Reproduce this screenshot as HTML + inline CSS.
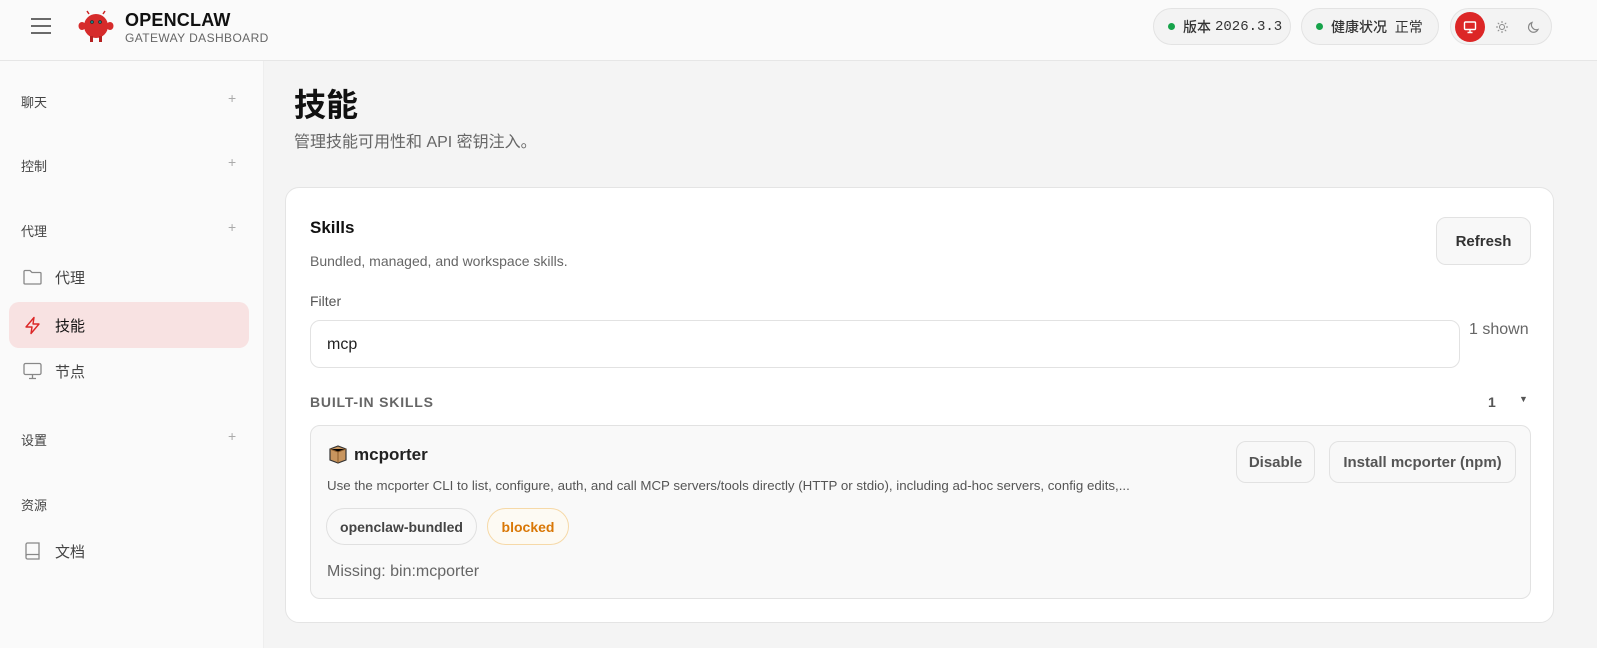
<!DOCTYPE html>
<html><head><meta charset="utf-8">
<style>
*{box-sizing:border-box;margin:0;padding:0}
body{width:1597px;height:648px;overflow:hidden;background:#f4f4f4;font-family:"Liberation Sans","Noto Sans CJK SC",sans-serif;color:#1f1f1f;position:relative}
.top{position:absolute;left:0;top:0;width:1597px;height:61px;background:#fafafa;border-bottom:1px solid #e6e6e6}
.side{position:absolute;left:0;top:61px;width:264px;height:587px;background:#fafafa;border-right:1px solid #eee}
.abs{position:absolute}
.pill{position:absolute;top:8px;height:37px;border:1px solid #e3e3e3;border-radius:19px;background:#f3f3f3;font-size:14px;display:flex;align-items:center;padding-left:14px;color:#333}
.dot{width:7px;height:7px;border-radius:50%;background:#16a34a;margin-right:8px}
.sec{position:absolute;left:21px;font-size:13px;color:#444}
.plus{position:absolute;left:228px;font-size:14px;color:#aaa}
.item{position:absolute;left:9px;width:240px;height:46px;border-radius:10px;display:flex;align-items:center;padding-left:14px;font-size:15px;color:#444}
.item svg{margin-right:13px}
.card{position:absolute;left:285px;top:187px;width:1269px;height:436px;background:#fff;border:1px solid #e4e4e4;border-radius:14px}
.btn{position:absolute;border:1px solid #e2e2e2;border-radius:10px;background:#f8f8f8;font-size:15px;display:flex;align-items:center;justify-content:center;color:#333}
.chip{position:absolute;height:37px;border-radius:19px;font-size:14px;display:flex;align-items:center;justify-content:center;font-weight:600}
</style></head><body>
<div class="top">
  <svg class="abs" style="left:30px;top:17px" width="22" height="18" viewBox="0 0 22 18"><path d="M1 2h20M1 9h20M1 16h20" stroke="#555" stroke-width="1.8"/></svg>
  <svg class="abs" style="left:78px;top:9px" width="36" height="34" viewBox="0 0 36 34"><path d="M11 5l-2-3M25 5l2-3" stroke="#c22" stroke-width="1.5"/><ellipse cx="18" cy="17" rx="12" ry="12" fill="#d62b2b"/><ellipse cx="4" cy="17" rx="3.5" ry="4" fill="#d62b2b"/><ellipse cx="32" cy="17" rx="3.5" ry="4" fill="#d62b2b"/><rect x="12" y="27" width="3" height="6" fill="#b52020"/><rect x="21" y="27" width="3" height="6" fill="#b52020"/><circle cx="14" cy="13" r="1.8" fill="#133"/><circle cx="22" cy="13" r="1.8" fill="#133"/><circle cx="14" cy="13" r="0.8" fill="#2dd"/><circle cx="22" cy="13" r="0.8" fill="#2dd"/></svg>
  <div class="abs" style="left:125px;top:10px;font-size:18px;font-weight:bold;color:#111;letter-spacing:0.2px">OPENCLAW</div>
  <div class="abs" style="left:125px;top:31px;font-size:12px;color:#666;letter-spacing:0.4px">GATEWAY DASHBOARD</div>
  <div class="pill" style="left:1153px;width:138px"><span class="dot"></span><span style="font-weight:500">版本</span> <span style="font-family:'Liberation Mono',monospace;margin-left:4px">2026.3.3</span></div>
  <div class="pill" style="left:1301px;width:138px"><span class="dot"></span><span style="font-weight:500">健康状况</span>&nbsp;&nbsp;正常</div>
  <div class="pill" style="left:1450px;width:102px;padding-left:4px">
    <div style="width:30px;height:30px;border-radius:50%;background:#dc2626;display:flex;align-items:center;justify-content:center"><svg width="14" height="14" viewBox="0 0 14 14"><rect x="1.5" y="2" width="11" height="7.5" rx="1" fill="none" stroke="#fff" stroke-width="1.4"/><path d="M7 9.5v3M4.5 12.5h5" stroke="#fff" stroke-width="1.4"/></svg></div>
    <svg style="margin-left:10px" width="14" height="14" viewBox="0 0 14 14"><circle cx="7" cy="7" r="2.5" fill="none" stroke="#888" stroke-width="1"/><path d="M7 1v2M7 11v2M1 7h2M11 7h2M2.8 2.8l1.4 1.4M9.8 9.8l1.4 1.4M2.8 11.2l1.4-1.4M9.8 4.2l1.4-1.4" stroke="#888" stroke-width="1"/></svg>
    <svg style="margin-left:18px" width="14" height="14" viewBox="0 0 14 14"><path d="M11 9.5A5 5 0 0 1 5 2.5a5 5 0 1 0 6 7z" fill="none" stroke="#888" stroke-width="1.2"/></svg>
  </div>
</div>
<div class="side">
  <div class="sec" style="top:31px">聊天</div><div class="plus" style="top:29px">+</div>
  <div class="sec" style="top:95px">控制</div><div class="plus" style="top:93px">+</div>
  <div class="sec" style="top:160px">代理</div><div class="plus" style="top:158px">+</div>
  <div class="item" style="top:193px"><svg width="19" height="16" viewBox="0 0 19 16"><path d="M1 2.5a1 1 0 0 1 1-1h5l2 2h8a1 1 0 0 1 1 1V14a1 1 0 0 1-1 1H2a1 1 0 0 1-1-1z" fill="none" stroke="#888" stroke-width="1.3"/></svg>代理</div>
  <div class="item" style="top:241px;background:#f8e2e2;color:#111"><svg width="19" height="19" viewBox="0 0 19 19"><path d="M11 1.5L3 11h6l-1 6.5 8-9.5h-6z" fill="none" stroke="#dc2626" stroke-width="1.4" stroke-linejoin="round"/></svg>技能</div>
  <div class="item" style="top:287px"><svg width="19" height="18" viewBox="0 0 19 18"><rect x="1" y="1.5" width="17" height="11" rx="1.5" fill="none" stroke="#888" stroke-width="1.3"/><path d="M9.5 12.5v4M6 16.5h7" stroke="#888" stroke-width="1.3"/></svg>节点</div>
  <div class="sec" style="top:369px">设置</div><div class="plus" style="top:367px">+</div>
  <div class="sec" style="top:434px">资源</div>
  <div class="item" style="top:467px"><svg width="19" height="18" viewBox="0 0 19 18"><path d="M3 2.5a1.5 1.5 0 0 1 1.5-1.5H16v16H4.5A1.5 1.5 0 0 1 3 15.5z M3 14a1.5 1.5 0 0 1 1.5-1.5H16" fill="none" stroke="#888" stroke-width="1.3"/></svg>文档</div>
</div>
<div class="abs" style="left:294px;top:80px;font-size:32px;font-weight:bold;color:#111">技能</div>
<div class="abs" style="left:294px;top:128px;font-size:16px;color:#666">管理技能可用性和 API 密钥注入。</div>
<div class="card">
  <div class="abs" style="left:24px;top:30px;font-size:17px;font-weight:bold;color:#111">Skills</div>
  <div class="abs" style="left:24px;top:65px;font-size:14px;color:#666">Bundled, managed, and workspace skills.</div>
  <div class="btn" style="left:1150px;top:29px;width:95px;height:48px;font-weight:bold">Refresh</div>
  <div class="abs" style="left:24px;top:105px;font-size:14px;color:#555">Filter</div>
  <div class="abs" style="left:24px;top:132px;width:1150px;height:48px;border:1px solid #e2e2e2;border-radius:10px;font-size:16px;padding:15px 0 0 16px;color:#222">mcp</div>
  <div class="abs" style="left:1183px;top:133px;font-size:16px;color:#666">1 shown</div>
  <div class="abs" style="left:24px;top:206px;font-size:14px;font-weight:bold;color:#666;letter-spacing:0.8px">BUILT-IN SKILLS</div>
  <div class="abs" style="left:1202px;top:206px;font-size:14px;font-weight:bold;color:#555">1</div>
  <div class="abs" style="left:1233px;top:206px;font-size:9px;color:#555">▼</div>
  <div class="abs" style="left:24px;top:237px;width:1221px;height:174px;border:1px solid #e2e2e2;border-radius:10px;background:#f9f9f9">
    <svg class="abs" style="left:17px;top:18px" width="20" height="20" viewBox="0 0 20 20"><path d="M2 5l8-3 8 3v11l-8 3-8-3z" fill="#c8955e" stroke="#333" stroke-width="1.2"/><path d="M2 5l8 3 8-3M10 8v11" stroke="#8a5a2a" stroke-width="1"/></svg>
    <div class="abs" style="left:43px;top:19px;font-size:17px;font-weight:bold;color:#222">mcporter</div>
    <div class="abs" style="left:16px;top:52px;font-size:13.3px;color:#555">Use the mcporter CLI to list, configure, auth, and call MCP servers/tools directly (HTTP or stdio), including ad-hoc servers, config edits,...</div>
    <div class="chip" style="left:15px;top:82px;width:151px;border:1px solid #e0e0e0;color:#444;background:#f9f9f9">openclaw-bundled</div>
    <div class="chip" style="left:176px;top:82px;width:82px;border:1px solid #f6d9a8;color:#d97706;background:#fdfaf3">blocked</div>
    <div class="abs" style="left:16px;top:137px;font-size:16px;color:#666">Missing: bin:mcporter</div>
    <div class="btn" style="left:925px;top:15px;width:79px;height:42px;border-radius:10px;font-weight:600;color:#555">Disable</div>
    <div class="btn" style="left:1018px;top:15px;width:187px;height:42px;border-radius:10px;font-weight:600;color:#555">Install mcporter (npm)</div>
  </div>
</div>
</body></html>
